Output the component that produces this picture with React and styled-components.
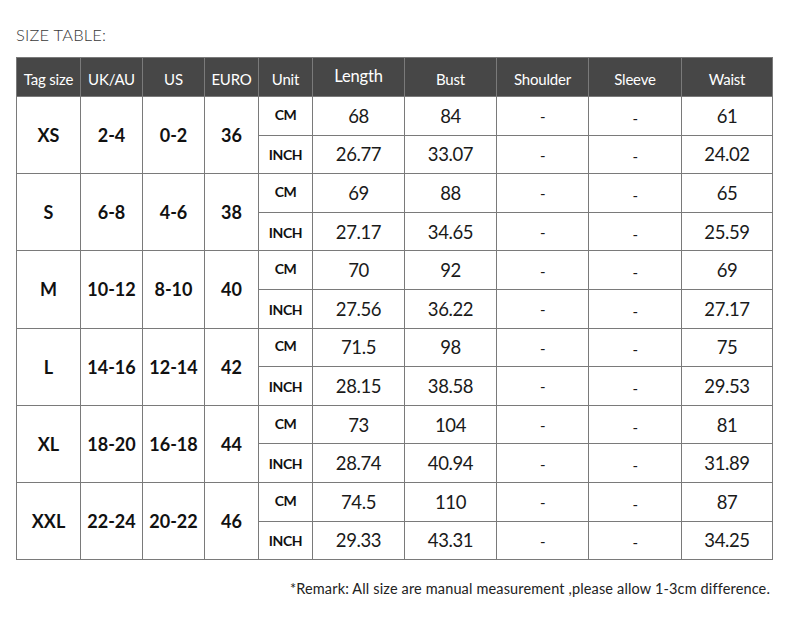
import styled, { createGlobalStyle } from "styled-components";

const GlobalStyle = createGlobalStyle`
  body {
    margin: 0;
    background: #ffffff;
    font-family: Lato, "Liberation Sans", sans-serif;
  }
`

const Page = styled.div`
  width: 789px;
  height: 631px;
  padding: 26px 16px 0 16px;
  box-sizing: border-box;
  display: flex;
  flex-direction: column;
  overflow: hidden;
`

const Title = styled.div`
  flex-shrink: 0;
  font-family: Lato, "Liberation Sans", sans-serif;
  font-weight: 300;
  font-size: 16.5px;
  line-height: 19px;
  color: #3a3a3a;
  letter-spacing: 0.2px;
  height: 31px;
`

const Table = styled.table`
  flex-shrink: 0;
  width: 756px;
  border-collapse: collapse;
  table-layout: fixed;
  border: 1px solid #7a7a7a;
`

const HeadCell = styled.th`
  box-sizing: border-box;
  background: #474747;
  color: #ffffff;
  font-weight: 400;
  font-size: ${p => (p.big ? "16.5px" : "15px")};
  height: 39px;
  padding: ${p => (p.big ? "0 0 3px 0" : "3px 0 0 0")};
  border: 1px solid #7a7a7a;
  text-align: center;
  white-space: nowrap;
  letter-spacing: -0.2px;
`

const GroupCell = styled.td`
  font-weight: 700;
  font-size: 18px;
  color: #111111;
  text-align: center;
  border: 1px solid #7a7a7a;
  padding: 0;
  white-space: nowrap;
`

const UnitCell = styled.td`
  box-sizing: border-box;
  font-weight: 700;
  font-size: 14px;
  line-height: 16px;
  color: #111111;
  text-align: center;
  border: 1px solid #7a7a7a;
  height: 38.6px;
  padding: ${p => (p.first ? "0 0 2px 0" : "2px 0 0 0")};
  letter-spacing: -0.4px;
`

const ValueCell = styled.td`
  font-weight: 400;
  font-size: 18.5px;
  line-height: 20px;
  color: #1a1a1a;
  text-align: center;
  border: 1px solid #7a7a7a;
  padding: ${p => (p.low ? "3px 0 0 0" : "0")};
  letter-spacing: -0.4px;
`

const Dash = styled.span`
  font-size: 15px;
`

const Remark = styled.div`
  flex-shrink: 0;
  margin-top: 20px;
  font-size: 14.5px;
  line-height: 17px;
  color: #222222;
  text-align: right;
  padding-right: 3px;
  letter-spacing: 0.15px;
`

const widths = [64, 62, 62, 54, 54, 92, 92, 92, 93, 91]

const heads = [
  { label: "Tag size" },
  { label: "UK/AU" },
  { label: "US" },
  { label: "EURO" },
  { label: "Unit" },
  { label: "Length", big: true },
  { label: "Bust" },
  { label: "Shoulder" },
  { label: "Sleeve" },
  { label: "Waist" },
]

const sizes = [
  { tag: "XS", uk: "2-4", us: "0-2", euro: "36", cm: ["68", "84", "61"], inch: ["26.77", "33.07", "24.02"] },
  { tag: "S", uk: "6-8", us: "4-6", euro: "38", cm: ["69", "88", "65"], inch: ["27.17", "34.65", "25.59"] },
  { tag: "M", uk: "10-12", us: "8-10", euro: "40", cm: ["70", "92", "69"], inch: ["27.56", "36.22", "27.17"] },
  { tag: "L", uk: "14-16", us: "12-14", euro: "42", cm: ["71.5", "98", "75"], inch: ["28.15", "38.58", "29.53"] },
  { tag: "XL", uk: "18-20", us: "16-18", euro: "44", cm: ["73", "104", "81"], inch: ["28.74", "40.94", "31.89"] },
  { tag: "XXL", uk: "22-24", us: "20-22", euro: "46", cm: ["74.5", "110", "87"], inch: ["29.33", "43.31", "34.25"] },
]

const SizeRows = ({ size }) => (
  <>
    <tr>
      <GroupCell rowSpan={2}>{size.tag}</GroupCell>
      <GroupCell rowSpan={2}>{size.uk}</GroupCell>
      <GroupCell rowSpan={2}>{size.us}</GroupCell>
      <GroupCell rowSpan={2}>{size.euro}</GroupCell>
      <UnitCell first>CM</UnitCell>
      <ValueCell>{size.cm[0]}</ValueCell>
      <ValueCell>{size.cm[1]}</ValueCell>
      <ValueCell><Dash>-</Dash></ValueCell>
      <ValueCell low><Dash>-</Dash></ValueCell>
      <ValueCell>{size.cm[2]}</ValueCell>
    </tr>
    <tr>
      <UnitCell>INCH</UnitCell>
      <ValueCell>{size.inch[0]}</ValueCell>
      <ValueCell>{size.inch[1]}</ValueCell>
      <ValueCell><Dash>-</Dash></ValueCell>
      <ValueCell low><Dash>-</Dash></ValueCell>
      <ValueCell>{size.inch[2]}</ValueCell>
    </tr>
  </>
)

const App = () => {
  return (
    <Page>
      <GlobalStyle />
      <Title>SIZE TABLE:</Title>
      <Table>
        <colgroup>
          {widths.map((w, i) => <col key={i} style={{ width: w }} />)}
        </colgroup>
        <thead>
          <tr>
            {heads.map(h => (
              <HeadCell key={h.label} big={h.big}>{h.label}</HeadCell>
            ))}
          </tr>
        </thead>
        <tbody>
          {sizes.map(s => <SizeRows key={s.tag} size={s} />)}
        </tbody>
      </Table>
      <Remark>*Remark: All size are manual measurement ,please allow 1-3cm difference.</Remark>
    </Page>
  )
}

export default App
